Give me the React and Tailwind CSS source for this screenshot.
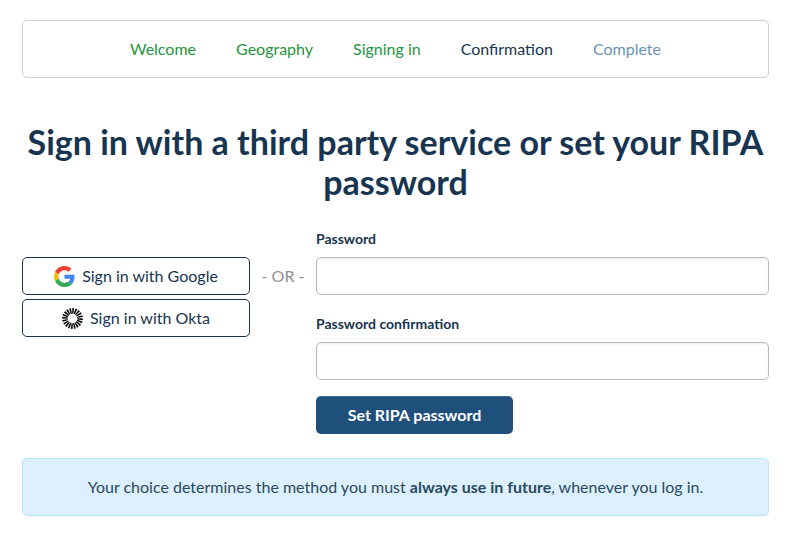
const steps = [
  { label: "Welcome", color: "text-[#1f9540]" },
  { label: "Geography", color: "text-[#1f9540]" },
  { label: "Signing in", color: "text-[#1f9540]" },
  { label: "Confirmation", color: "text-[#173550]" },
  { label: "Complete", color: "text-[#6b91b8]" },
];

function GoogleIcon() {
  return (
    <svg viewBox="0 0 48 48" className="size-[21px]" aria-hidden="true">
      <path fill="#EA4335" d="M24 9.5c3.54 0 6.71 1.22 9.21 3.6l6.85-6.85C35.9 2.38 30.47 0 24 0 14.62 0 6.51 5.38 2.56 13.22l7.98 6.19C12.43 13.72 17.74 9.5 24 9.5z" />
      <path fill="#4285F4" d="M46.98 24.55c0-1.57-.15-3.09-.38-4.55H24v9.02h12.94c-.58 2.96-2.26 5.48-4.78 7.18l7.73 6c4.51-4.18 7.09-10.36 7.09-17.65z" />
      <path fill="#FBBC05" d="M10.53 28.59c-.48-1.45-.76-2.99-.76-4.59s.27-3.14.76-4.59l-7.98-6.19C.92 16.46 0 20.12 0 24c0 3.88.92 7.54 2.56 10.78l7.97-6.19z" />
      <path fill="#34A853" d="M24 48c6.48 0 11.93-2.13 15.89-5.81l-7.73-6c-2.15 1.45-4.92 2.3-8.16 2.3-6.26 0-11.57-4.22-13.47-9.91l-7.98 6.19C6.51 42.62 14.62 48 24 48z" />
    </svg>
  );
}

const rays = Array.from({ length: 20 }, (_, i) => i * 18 + 3);

function OktaIcon() {
  return (
    <svg viewBox="0 0 22 22" className="size-[21px]" aria-hidden="true">
      {rays.map((a) => (
        <path key={a} d="M10.3 0.1L12.2 0.2L11.7 5.7Q11.6 6.1 11 6.1Q10.4 6.1 10.4 5.7Z" fill="#000" transform={`rotate(${a} 11 11)`} />
      ))}
    </svg>
  );
}

function ProviderButton({ icon, children }) {
  return (
    <button type="button" className="flex h-[38px] w-full items-center justify-center gap-[7px] rounded-[5px] border border-[#173550] bg-white">
      {icon}
      {children}
    </button>
  );
}

function PasswordField({ id, label }) {
  return (
    <div className="mb-4">
      <label htmlFor={id} className="mb-[5px] block text-sm leading-[26px] font-bold">{label}</label>
      <input id={id} type="password" className="block h-[38px] w-full rounded-[5px] border border-[#b8b8b8] bg-white px-3 shadow-[inset_0_1px_2px_rgba(0,0,0,0.08)]" />
    </div>
  );
}

export default function App() {
  return (
    <main className="pt-5 pr-5 pb-5 pl-[22px] font-['Lato',sans-serif] text-base leading-6 text-[#173550]">
      <nav aria-label="Progress" className="rounded-[5px] border border-[#cfd0d2] py-4">
        <ol className="flex justify-center gap-10">
          {steps.map((s) => (
            <li key={s.label} className={s.color}>{s.label}</li>
          ))}
        </ol>
      </nav>
      <h1 className="mt-11 text-center text-[34px] leading-10 font-bold">
        Sign in with a third party service or set your RIPA password
      </h1>
      <div className="mt-6 flex items-start">
        <div className="mt-[31px] flex w-[228px] flex-col gap-1">
          <ProviderButton icon={<GoogleIcon />}>Sign in with Google</ProviderButton>
          <ProviderButton icon={<OktaIcon />}>Sign in with Okta</ProviderButton>
        </div>
        <div className="mt-[38px] w-[66px] text-center text-[#8e8e93]">- OR -</div>
        <form className="flex-1">
          <PasswordField id="password" label="Password" />
          <PasswordField id="confirmation" label="Password confirmation" />
          <button type="button" className="block h-[38px] w-[197px] rounded-[5px] bg-[#1f507c] font-bold text-white shadow-[inset_0_1px_0_rgba(255,255,255,0.12)]">Set RIPA password</button>
        </form>
      </div>
      <p className="mt-6 rounded-[5px] border border-[#b8e4f8] bg-[#dcf0ff] py-4 text-center text-[#2b4a5c]">
        Your choice determines the method you must <strong>always use in future</strong>, whenever you log in.
      </p>
    </main>
  );
}
